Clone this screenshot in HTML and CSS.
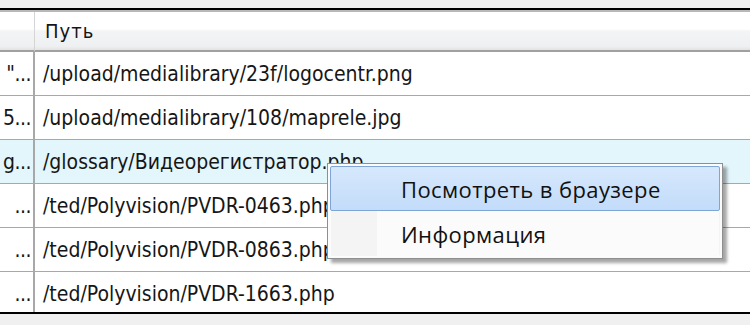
FILE: index.html
```html
<!DOCTYPE html>
<html lang="ru">
<head>
    <meta charset="UTF-8">
    <title>Файлы</title>
    <link rel="stylesheet" href="styles.css">
</head>
<body>
    <div class="frame">
        <div class="grid">
            <div class="head cell first"></div>
            <div class="head cell">Путь</div>

            <div class="cell first">"...</div>
            <div class="cell">/upload/medialibrary/23f/logocentr.png</div>

            <div class="cell first">5...</div>
            <div class="cell">/upload/medialibrary/108/maprele.jpg</div>

            <div class="cell first hot">g...</div>
            <div class="cell hot">/glossary/Видеорегистратор.php</div>

            <div class="cell first">...</div>
            <div class="cell">/ted/Polyvision/PVDR-0463.php</div>

            <div class="cell first">...</div>
            <div class="cell">/ted/Polyvision/PVDR-0863.php</div>

            <div class="cell first last">...</div>
            <div class="cell last">/ted/Polyvision/PVDR-1663.php</div>
        </div>

        <div class="menu">
            <div class="menu-item active">Посмотреть в браузере</div>
            <div class="menu-item">Информация</div>
        </div>
    </div>
</body>
</html>
```

FILE: styles.css
```css
body {
    margin: 0;
    background: #f0f0f0;
    font-family: "DejaVu Sans Condensed", "DejaVu Sans", sans-serif;
    color: #161616;
}

.frame {
    position: relative;
    margin-top: 8px;
    border-top: 2px solid #000;
    border-bottom: 2px solid #000;
    background: #fff;
    height: 302px;
    overflow: hidden;
}

.grid {
    display: grid;
    grid-template-columns: 35px 1fr;
    border-top: 2px solid #b8b8b8;
}

.cell {
    height: 43px;
    display: flex;
    align-items: center;
    padding-left: 8px;
    font-size: 21px;
    border-bottom: 1px solid #a8a8a8;
    white-space: nowrap;
    overflow: hidden;
}

.cell.first {
    justify-content: flex-end;
    padding: 0 2px 0 0;
    letter-spacing: -0.5px;
    border-right: 2px solid #a8a8a8;
}

.cell.last {
    border-bottom: none;
}

.cell.hot {
    background: #e3f6fc;
}

.head {
    height: 38px;
    font-size: 20px;
    letter-spacing: 1px;
    background: linear-gradient(#ffffff 0%, #ffffff 45%, #f3f4f6 50%, #eff0f2 90%, #e2e3e5 100%);
    border-bottom: 2px solid #a0a0a0;
    padding-left: 10px;
}

.head.first {
    border-right: 1px solid #d5d5d5;
}

.menu {
    position: absolute;
    left: 327px;
    top: 153px;
    width: 390px;
    padding: 2px;
    background: #fbfbfb;
    border: 1px solid #8e8e8e;
    box-shadow: 4px 4px 3px rgba(0, 0, 0, 0.35);
    font-family: "Open Sans", "Noto Sans", sans-serif;
}

.menu-item {
    height: 43px;
    display: flex;
    align-items: center;
    padding-left: 70px;
    font-size: 22px;
    letter-spacing: 0.4px;
    color: #111;
    border: 1px solid transparent;
    border-radius: 2px;
    background: linear-gradient(90deg, #f4f4f4 0, #f4f4f4 46px, transparent 46px);
}

.menu-item.active {
    background: linear-gradient(#d6e8fc, #c3dcfa);
    border-color: #7ea5d6;
}
```
